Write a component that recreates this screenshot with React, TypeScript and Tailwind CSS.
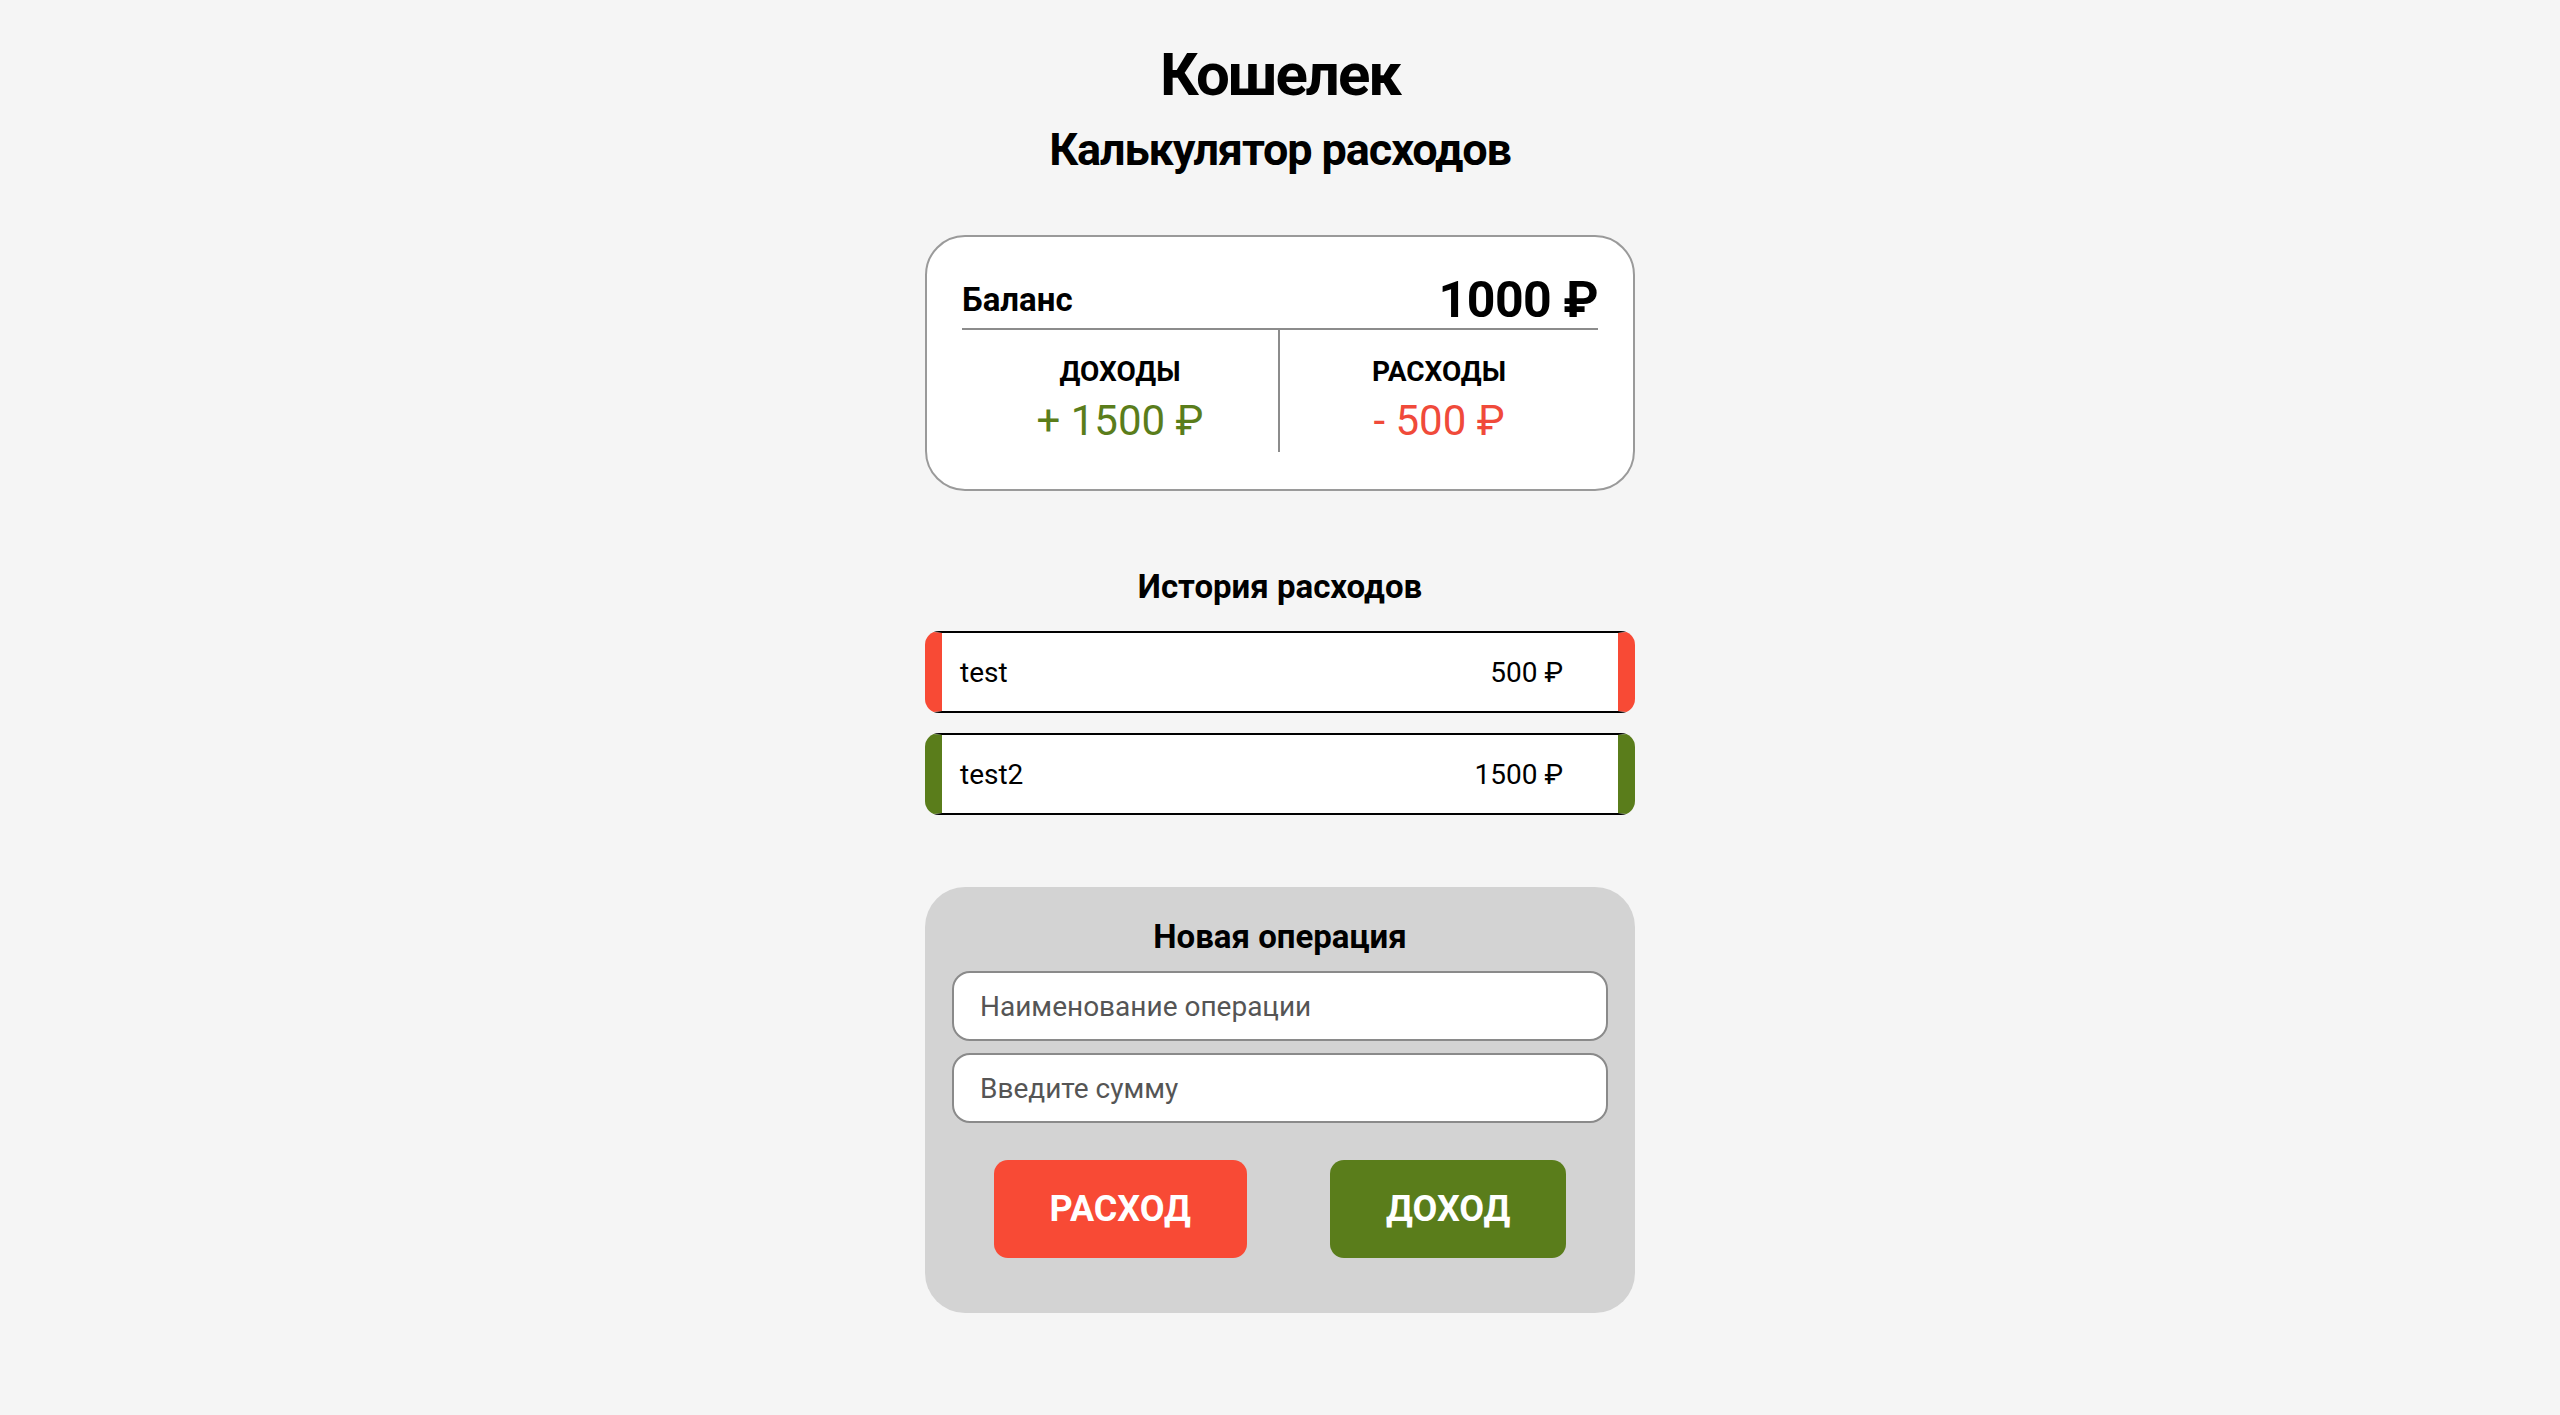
import React from 'react';

type Operation = {
  id: number;
  name: string;
  amount: number;
  type: 'expense' | 'income';
};

const operations: Operation[] = [
  { id: 1, name: 'test', amount: 500, type: 'expense' },
  { id: 2, name: 'test2', amount: 1500, type: 'income' },
];

export default function App() {
  return (
    <div className="min-h-screen bg-[#f5f5f5] pt-[37px] flex flex-col items-center font-['Roboto',sans-serif] text-black">
      <h1 className="text-[60px] font-bold leading-[75px] tracking-[-2px]">Кошелек</h1>
      <h2 className="mt-[10px] text-[45px] font-bold leading-[56px] tracking-[-1.1px]">Калькулятор расходов</h2>

      {/* balance */}
      <div className="mt-[57px] w-[710px] rounded-[40px] border-2 border-[#9a9a9a] bg-white px-[35px] pt-[35px] pb-[37px]">
        <div className="flex items-center justify-between border-b-2 border-[#8c8c8c]">
          <span className="text-[33px] font-bold leading-[38px]">Баланс</span>
          <span className="text-[50px] font-bold leading-[56px] tracking-[-0.5px]">1000 ₽</span>
        </div>
        <div className="grid grid-cols-2">
          <div className="border-r-2 border-[#8c8c8c] pt-[25px] pb-[8px] text-center">
            <div className="text-[28px] font-bold leading-[33px]">ДОХОДЫ</div>
            <div className="mt-[9px] text-[42px] leading-[47px] text-[#5a7d1b]">+ 1500 ₽</div>
          </div>
          <div className="pt-[25px] pb-[8px] text-center">
            <div className="text-[28px] font-bold leading-[33px]">РАСХОДЫ</div>
            <div className="mt-[9px] text-[42px] leading-[47px] text-[#f04a3a]">- 500 ₽</div>
          </div>
        </div>
      </div>

      {/* history */}
      <h3 className="mt-[77px] text-[33px] font-bold leading-[38px]">История расходов</h3>
      <div className="mt-[25px] flex flex-col gap-[20px]">
        {operations.map(op => (
          <div
            key={op.id}
            className={
              op.type === 'expense'
                ? 'flex h-[82px] w-[710px] items-center justify-between rounded-[14px] border-y-2 border-x-[17px] border-y-black border-x-[#f84a35] bg-white pl-[18px] pr-[55px]'
                : 'flex h-[82px] w-[710px] items-center justify-between rounded-[14px] border-y-2 border-x-[17px] border-y-black border-x-[#5a7d1b] bg-white pl-[18px] pr-[55px]'
            }
          >
            <span className="text-[28px] leading-[33px]">{op.name}</span>
            <span className="text-[28px] leading-[33px]">{op.amount} ₽</span>
          </div>
        ))}
      </div>

      {/* new operation */}
      <div className="mt-[72px] w-[710px] rounded-[40px] bg-[#d3d3d3] px-[27px] pt-[31px] pb-[55px]">
        <div className="text-center text-[33px] font-bold leading-[38px]">Новая операция</div>
        <div className="mt-[15px] flex flex-col gap-[12px]">
          <input
            type="text"
            placeholder="Наименование операции"
            className="h-[70px] w-full rounded-[18px] border-2 border-[#8a8a8a] bg-white px-[26px] text-[28px] placeholder:text-[#555] outline-none"
          />
          <input
            type="text"
            placeholder="Введите сумму"
            className="h-[70px] w-full rounded-[18px] border-2 border-[#8a8a8a] bg-white px-[26px] text-[28px] placeholder:text-[#555] outline-none"
          />
        </div>
        <div className="mt-[37px] flex justify-around">
          <button className="h-[98px] rounded-[14px] bg-[#f84a35] px-[56px] text-[36px] font-bold leading-[42px] text-white">
            РАСХОД
          </button>
          <button className="h-[98px] rounded-[14px] bg-[#5a7d1b] px-[56px] text-[36px] font-bold leading-[42px] text-white">
            ДОХОД
          </button>
        </div>
      </div>
    </div>
  );
}
